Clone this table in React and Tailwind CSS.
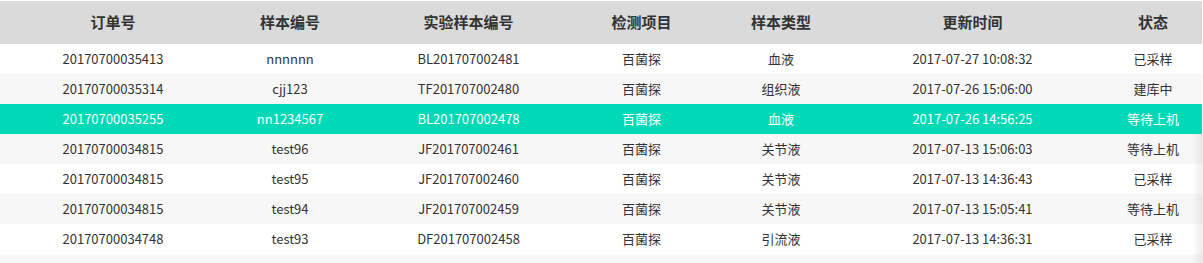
import React from 'react'

const cols = ['订单号', '样本编号', '实验样本编号', '检测项目', '样本类型', '更新时间', '状态']

const rows = [
  ['20170700035413', 'nnnnnn', 'BL201707002481', '百菌探', '血液', '2017-07-27 10:08:32', '已采样'],
  ['20170700035314', 'cjj123', 'TF201707002480', '百菌探', '组织液', '2017-07-26 15:06:00', '建库中'],
  ['20170700035255', 'nn1234567', 'BL201707002478', '百菌探', '血液', '2017-07-26 14:56:25', '等待上机'],
  ['20170700034815', 'test96', 'JF201707002461', '百菌探', '关节液', '2017-07-13 15:06:03', '等待上机'],
  ['20170700034815', 'test95', 'JF201707002460', '百菌探', '关节液', '2017-07-13 14:36:43', '已采样'],
  ['20170700034815', 'test94', 'JF201707002459', '百菌探', '关节液', '2017-07-13 15:05:41', '等待上机'],
  ['20170700034748', 'test93', 'DF201707002458', '百菌探', '引流液', '2017-07-13 14:36:31', '已采样'],
]

// column widths picked so the centered text lands where the screenshot has it
const grid = 'grid grid-cols-[184px_170px_187px_159px_120px_263px_98px] pl-[21px] items-center justify-items-center'

export default function App() {
  return (
    <div
      className="relative w-[1203px] h-[263px] overflow-hidden bg-white pt-px pr-px text-[#333]"
      style={{ fontFamily: '"Noto Sans CJK SC", "Open Sans", sans-serif' }}
    >
      {/* header */}
      <div className={`${grid} h-[43px] bg-[#dadada] text-[15px] font-bold text-[#333]`}>
        {cols.map((c) => (
          <div key={c}>{c}</div>
        ))}
      </div>

      {/* body */}
      {rows.map((r, i) => {
        const active = i === 2
        const bg = active ? 'bg-[#00d9b6] text-white' : i % 2 === 1 ? 'bg-[#f7f7f7]' : 'bg-white'
        return (
          <div key={i} className={`${grid} h-[30px] text-[13px] ${bg}`}>
            {r.map((v, j) => (
              <div key={j}>{v}</div>
            ))}
          </div>
        )
      })}
      <div className="h-[30px] bg-[#f7f7f7]" />

      {/* scroll shadow on the right edge */}
      <div className="absolute right-0 top-[134px] bottom-0 w-[11px] bg-gradient-to-r from-transparent to-black/[0.07]" />
    </div>
  )
}
